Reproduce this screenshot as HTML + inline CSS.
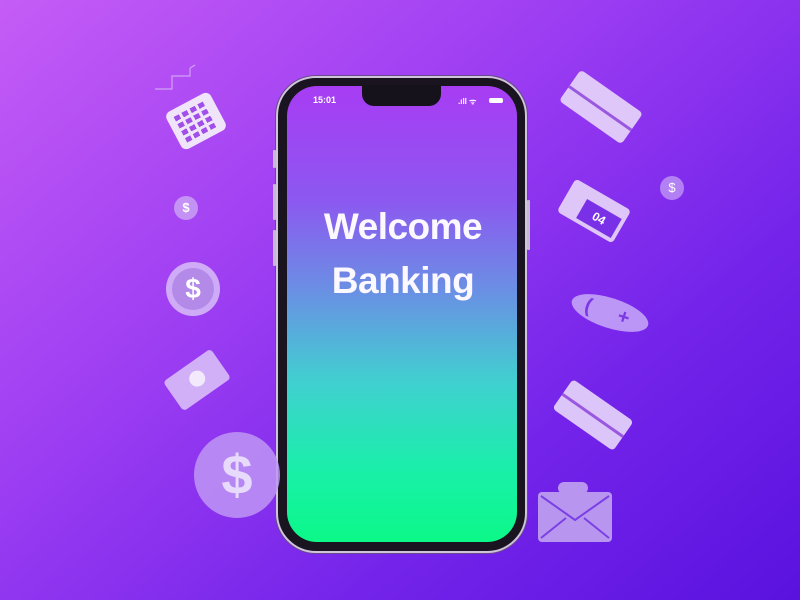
<!DOCTYPE html>
<html><head><meta charset="utf-8"><style>
*{margin:0;padding:0;box-sizing:border-box}
body{width:800px;height:600px;overflow:hidden;position:relative;font-family:"Liberation Sans",sans-serif;
background:linear-gradient(140deg,#c55cf6 0%,#9a3cf2 40%,#7424ea 70%,#5a12df 100%);}
.a{position:absolute}
.ic{background:rgba(225,205,250,0.85)}
.phone{left:276px;top:76px;width:251px;height:477px;border-radius:40px;background:#1a1420;border:2px solid #d0c4dc;box-shadow:0 0 0 1px #6a4a8a}
.screen{left:287px;top:86px;width:230px;height:456px;border-radius:30px;
background:linear-gradient(180deg,#a83cf4 0%,#8c58f0 25%,#6a90e4 45%,#40d0d0 65%,#18f0a8 85%,#0cf888 100%)}
.notch{left:362px;top:85px;width:79px;height:21px;background:#16121c;border-radius:0 0 12px 12px}
.t{color:#fbf8ff;font-weight:bold;font-size:37px;text-align:center;width:230px;left:288px;letter-spacing:-0.5px}
.btn{background:#c8b8d8;width:3px;border-radius:1px}
.card{background:rgba(232,215,250,0.9);border-radius:4px}
</style></head><body>
<div class="a phone"></div>
<div class="a btn" style="left:273px;top:150px;height:18px"></div>
<div class="a btn" style="left:273px;top:184px;height:36px"></div>
<div class="a btn" style="left:273px;top:230px;height:36px"></div>
<div class="a btn" style="left:527px;top:200px;height:50px"></div>
<div class="a screen"></div>
<div class="a notch"></div>
<div class="a" style="left:313px;top:95px;color:#fff;font-size:9px;font-weight:bold">15:01</div>
<div class="a" style="left:458px;top:96px;color:#fff;font-size:8px;font-weight:bold">.ıll ᯤ</div>
<div class="a" style="left:489px;top:98px;width:14px;height:5px;background:#fff;border-radius:2px"></div>
<div class="a t" style="top:206px">Welcome</div>
<div class="a t" style="top:260px">Banking</div>

<!-- left icons -->
<div class="a card" style="left:171px;top:100px;width:50px;height:42px;transform:rotate(-28deg);border-radius:6px;background:#f0e4fa">
<div style="position:absolute;left:7px;top:6px;width:36px;height:30px;background:repeating-linear-gradient(90deg,#a050e8 0 6px,transparent 6px 9px);-webkit-mask:repeating-linear-gradient(0deg,#000 0 5px,transparent 5px 8px);mask:repeating-linear-gradient(0deg,#000 0 5px,transparent 5px 8px)"></div></div>
<svg class="a" style="left:150px;top:62px" width="50" height="36"><path d="M5 27 H22 V14 H40 V6 M40 6 l5 -3" stroke="#d8b8f4" fill="none" stroke-width="1.2" opacity=".8"/></svg>
<div class="a" style="left:174px;top:196px;width:24px;height:24px;border-radius:50%;background:rgba(210,180,245,.7);color:#fff;font-size:13px;font-weight:bold;text-align:center;line-height:24px">$</div>
<div class="a" style="left:166px;top:262px;width:54px;height:54px;border-radius:50%;background:rgba(215,190,248,.85);">
<div style="position:absolute;left:6px;top:6px;width:42px;height:42px;border-radius:50%;background:#b48ae8;color:#fff;font-size:28px;font-weight:bold;text-align:center;line-height:42px">$</div></div>
<div class="a ic" style="left:168px;top:362px;width:58px;height:36px;transform:rotate(-35deg);border-radius:4px;background:rgba(215,190,248,.9)">
<div style="position:absolute;left:22px;top:9px;width:16px;height:16px;border-radius:50%;background:#f2eafc"></div></div>
<div class="a" style="left:194px;top:432px;width:86px;height:86px;border-radius:50%;background:rgba(190,150,245,.85);color:#e8dafc;font-size:56px;font-weight:bold;text-align:center;line-height:86px">$</div>

<!-- right icons -->
<div class="a card" style="left:563px;top:88px;width:76px;height:38px;transform:rotate(35deg)">
<div style="position:absolute;left:0;top:19px;width:76px;height:3px;background:#9a58e0"></div></div>
<div class="a" style="left:660px;top:176px;width:24px;height:24px;border-radius:50%;background:rgba(190,150,245,.8);color:#fff;font-size:13px;text-align:center;line-height:24px">$</div>
<div class="a card" style="left:562px;top:192px;width:64px;height:38px;transform:rotate(30deg)">
<div style="position:absolute;left:20px;top:12px;width:40px;height:22px;background:#7a30e6;color:#fff;font-size:12px;font-weight:bold;text-align:center;line-height:22px">04</div></div>
<div class="a" style="left:570px;top:298px;width:80px;height:30px;border-radius:50%;background:rgba(200,170,248,.85);transform:rotate(18deg);color:#7a38e4;font-size:20px;font-weight:bold;line-height:30px;padding-left:14px">(&nbsp;&nbsp;&nbsp;&nbsp;&nbsp;+</div>
<div class="a card" style="left:556px;top:397px;width:74px;height:36px;transform:rotate(35deg)">
<div style="position:absolute;left:0;top:17px;width:74px;height:3px;background:#9a58e0"></div></div>
<svg class="a" style="left:536px;top:482px" width="78" height="62"><rect x="22" y="0" width="30" height="12" rx="6" fill="#b896f0"/><rect x="2" y="10" width="74" height="50" rx="4" fill="#b896f0"/><path d="M5 14 L39 38 L73 14 M5 56 L30 36 M73 56 L48 36" stroke="#7a40e4" stroke-width="2" fill="none"/></svg>
</body></html>
